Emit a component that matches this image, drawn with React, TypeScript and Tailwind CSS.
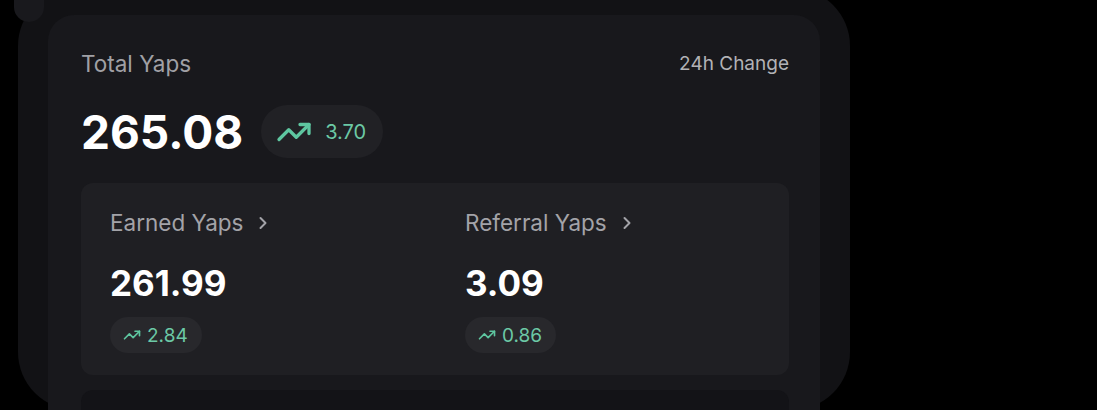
import { ChevronRight, TrendingUp } from 'lucide-react';

const FONT = { fontFamily: 'Inter, "Noto Sans", sans-serif' };

function ChangePill({ value, size }: { value: string; size: 'lg' | 'sm' }) {
  if (size === 'lg') {
    return (
      <div className="flex items-center gap-[13px] h-[53px] pl-[15px] pr-[17px] rounded-full bg-[#212125]">
        <TrendingUp size={36} strokeWidth={2.2} className="text-[#5ec6a0]" />
        <span className="text-[20px] text-[#6cc9a6]">{value}</span>
      </div>
    );
  }
  return (
    <div className="flex items-center gap-[6px] h-[36px] pl-[13px] pr-[14px] rounded-full bg-[#28282c] w-fit">
      <TrendingUp size={18} strokeWidth={2.2} className="text-[#5ec6a0]" />
      <span className="text-[19px] leading-none text-[#6cc9a6]">{value}</span>
    </div>
  );
}

function SubStat({
  label,
  value,
  change,
  width,
}: {
  label: string;
  value: string;
  change: string;
  width: string;
}) {
  return (
    <div className={`flex flex-col ${width}`}>
      <div className="flex items-center gap-[10px] h-[28px]">
        <span className="text-[22.5px] text-[#a3a3a8]">{label}</span>
        <ChevronRight size={20} strokeWidth={2.4} className="text-[#a3a3a8]" />
      </div>
      <div className="mt-[26px] h-[40px] flex items-center text-[35px] font-bold text-white leading-none">
        {value}
      </div>
      <div className="mt-[14px]">
        <ChangePill value={change} size="sm" />
      </div>
    </div>
  );
}

export default function App() {
  return (
    <div className="relative w-[1097px] h-[410px] bg-black overflow-hidden" style={FONT}>
      <div className="absolute left-[14px] top-[-24px] w-[30px] h-[46px] rounded-full bg-[#19191d]" />
      <div className="ml-[18px] mt-[-12px] w-[832px] h-[422px] rounded-[58px] bg-[#121215] pl-[30px] pt-[27px]">
        <div className="w-[772px] h-[420px] rounded-t-[26px] bg-[#18181c] pl-[33px] pr-[31px] pt-[35px] flex flex-col">
          <div className="flex items-center justify-between h-[28px]">
            <span className="text-[22.5px] text-[#a0a0a5]">Total Yaps</span>
            <span className="text-[19px] text-[#b2b2b6]">24h Change</span>
          </div>
          <div className="mt-[27px] flex items-center gap-[18px]">
            <span className="text-[46px] font-bold text-white leading-none">265.08</span>
            <ChangePill value="3.70" size="lg" />
          </div>
          <div className="mt-[25px] rounded-[12px] bg-[#1f1f23] pl-[29px] pt-[26px] pb-[22px] flex">
            <SubStat label="Earned Yaps" value="261.99" change="2.84" width="w-[355px]" />
            <SubStat label="Referral Yaps" value="3.09" change="0.86" width="w-[300px]" />
          </div>
          <div className="mt-[15px] h-[60px] rounded-t-[12px] bg-[#131317]" />
        </div>
      </div>
    </div>
  );
}
